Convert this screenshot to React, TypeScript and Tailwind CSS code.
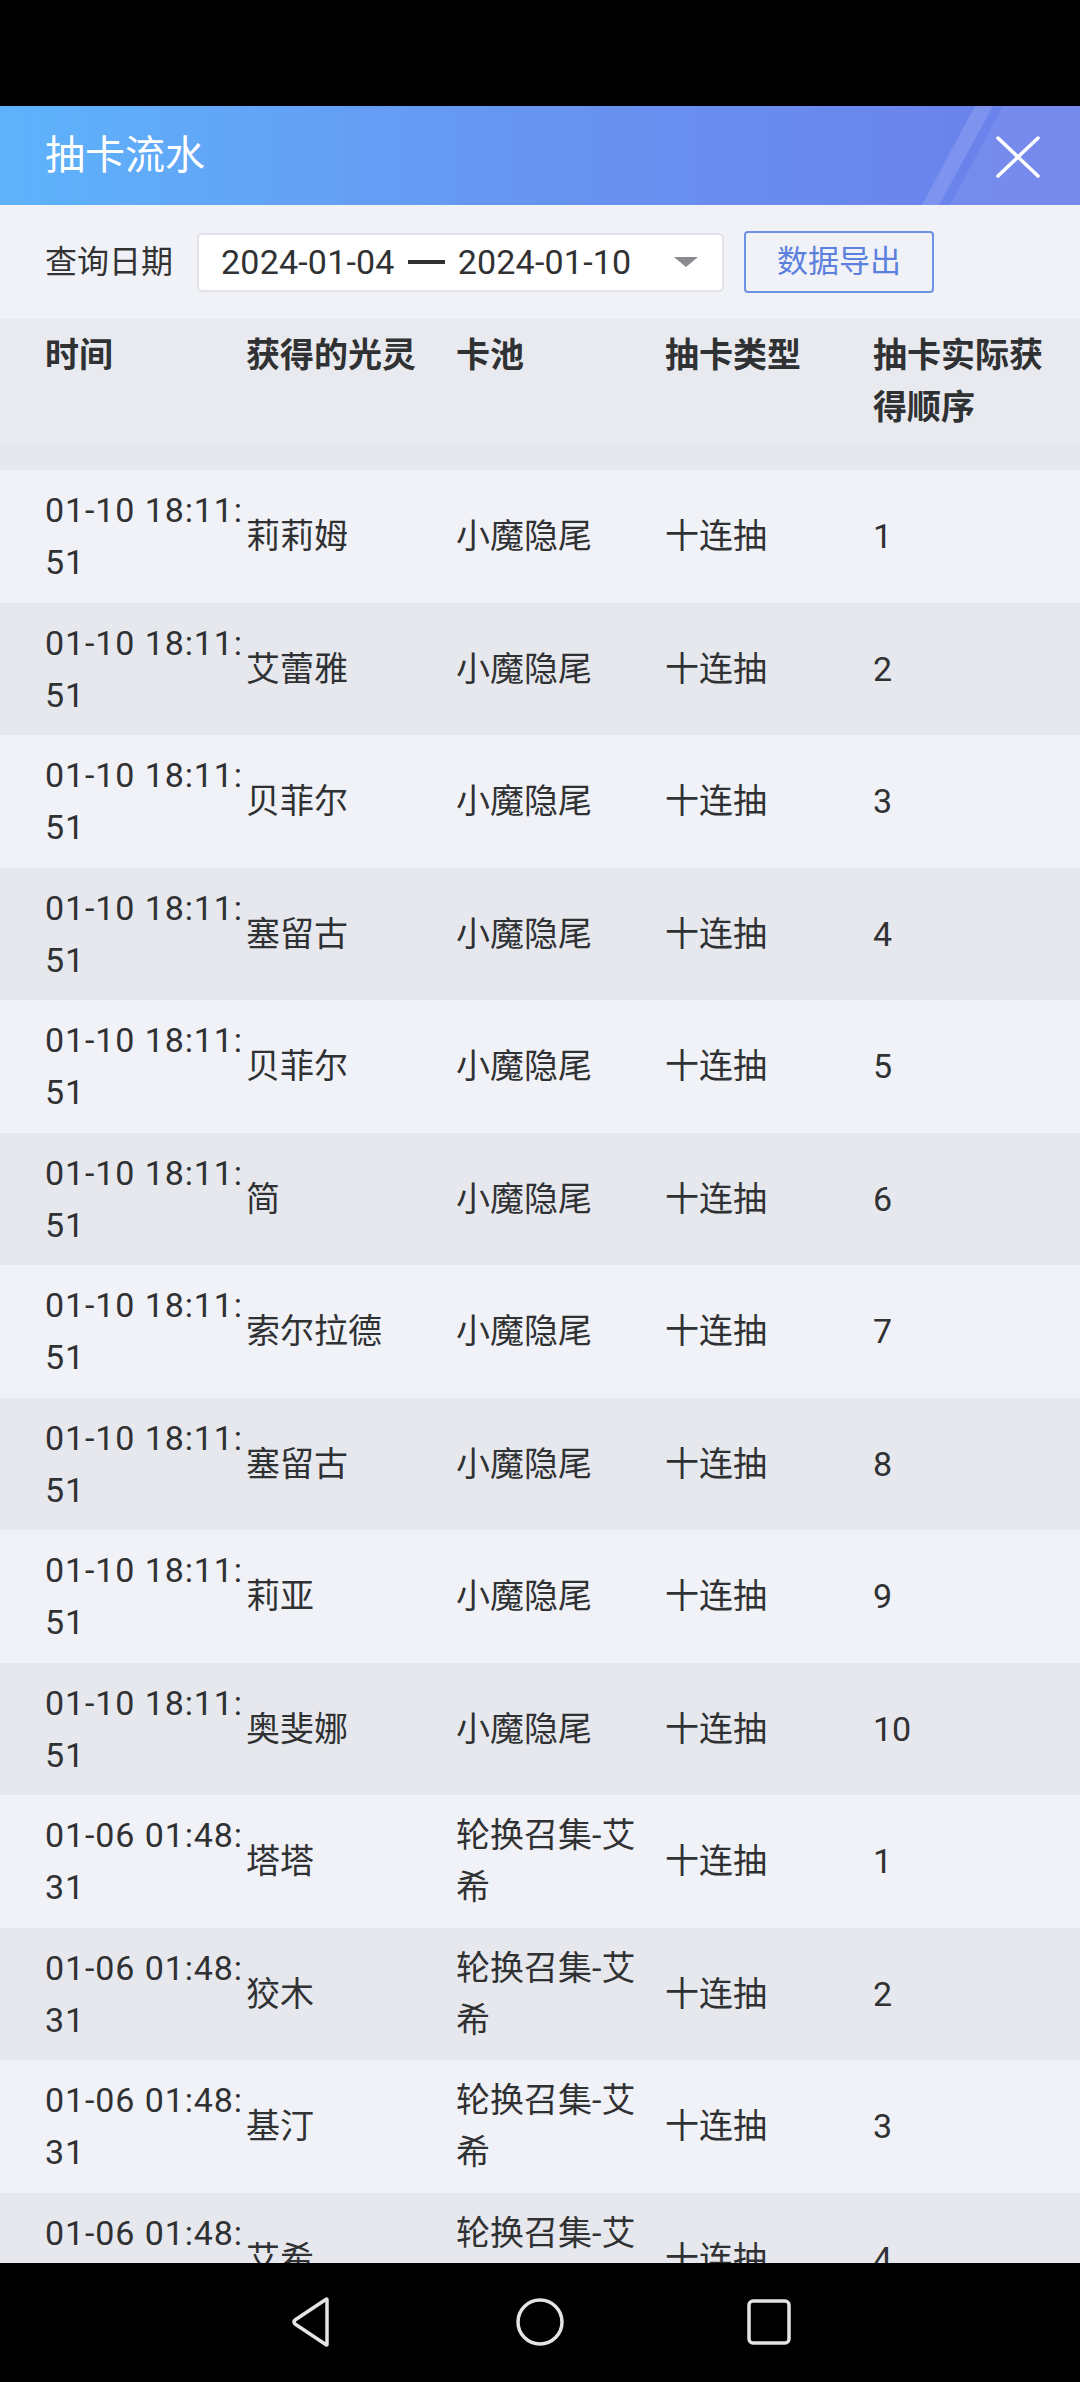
const font = { fontFamily: 'Roboto, "Noto Sans CJK SC", sans-serif' };

type Row = { time: string; name: string; pool: string[]; order: number };

const first = ['莉莉姆', '艾蕾雅', '贝菲尔', '塞留古', '贝菲尔', '简', '索尔拉德', '塞留古', '莉亚', '奥斐娜'];
const second = ['塔塔', '狡木', '基汀', '艾希'];

const rows: Row[] = [
  ...first.map((name, i) => ({ time: '01-10 18:11:|51', name, pool: ['小魔隐尾'], order: i + 1 })),
  ...second.map((name, i) => ({ time: '01-06 01:48:|31', name, pool: ['轮换召集-艾', '希'], order: i + 1 })),
];

function CloseIcon() {
  return (
    <svg width="44" height="42" viewBox="0 0 44 42" fill="none">
      <path d="M2 2 L42 40 M42 2 L2 40" stroke="white" strokeWidth="3.5" strokeLinecap="round" />
    </svg>
  );
}

function NavBar() {
  return (
    <div className="flex h-[119px] shrink-0 items-center justify-center gap-[182px] bg-black pb-[2px]">
      <svg width="44" height="50" viewBox="0 0 44 50" fill="none">
        <path d="M38 3 L38 47 Q38 49 36 47 L6 27 Q4 25 6 23 L36 3 Q38 1 38 3 Z" stroke="#e4e4e4" strokeWidth="3.5" strokeLinejoin="round" />
      </svg>
      <svg width="50" height="50" viewBox="0 0 50 50" fill="none">
        <circle cx="25" cy="25" r="22" stroke="#e4e4e4" strokeWidth="3.5" />
      </svg>
      <svg width="44" height="46" viewBox="0 0 44 46" fill="none">
        <rect x="2" y="2" width="40" height="42" rx="4" stroke="#e4e4e4" strokeWidth="3.5" />
      </svg>
    </div>
  );
}

export default function App() {
  return (
    <div className="flex h-[2382px] w-[1080px] flex-col overflow-hidden bg-[#f0f2f7] text-[#303133]" style={font}>
      <div className="h-[106px] shrink-0 bg-black" />

      {/* title bar */}
      <div className="relative flex h-[99px] shrink-0 items-center overflow-hidden bg-gradient-to-r from-[#5db3fb] via-[#6794f1] to-[#6b7feb] pl-[45px]">
        <svg className="absolute inset-0" width="1080" height="99" viewBox="0 0 1080 99">
          <polygon points="975,0 993,0 939,99 922,99" fill="white" fillOpacity="0.13" />
          <polygon points="1003,0 1080,0 1080,99 950,99" fill="white" fillOpacity="0.08" />
        </svg>
        <span className="relative text-[40px] leading-none text-white">抽卡流水</span>
        <div className="absolute right-[40px] top-[30px]">
          <CloseIcon />
        </div>
      </div>

      {/* filter */}
      <div className="flex h-[114px] shrink-0 items-center pl-[45px]">
        <span className="text-[32px] text-[#333]">查询日期</span>
        <div className="ml-[24px] flex h-[59px] w-[527px] items-center rounded-[5px] border-2 border-[#e1e3e8] bg-white pl-[22px] pr-[24px]">
          <span className="text-[34px] leading-none tracking-[0.2px] text-[#303133]">2024-01-04</span>
          <span className="mx-[13px] h-[4px] w-[37px] bg-[#303133]" />
          <span className="text-[34px] leading-none tracking-[0.2px] text-[#303133]">2024-01-10</span>
          <svg className="ml-auto" width="24" height="10" viewBox="0 0 24 10">
            <polygon points="0,0 24,0 12,10" fill="#8a8b8f" />
          </svg>
        </div>
        <button className="ml-[20px] flex h-[62px] w-[190px] items-center justify-center rounded-[4px] border-2 border-[#6e92e3] text-[31px] text-[#5c80dd]">
          数据导出
        </button>
      </div>

      {/* table */}
      <div className="flex-1 overflow-hidden">
        <div className="bg-[#e8eaef]">
          <div className="grid h-[124px] grid-cols-[201px_210px_209px_208px_1fr] pl-[45px] pt-[10px] text-[34px] font-bold leading-[52px]">
            <div>时间</div>
            <div>获得的光灵</div>
            <div>卡池</div>
            <div>抽卡类型</div>
            <div>
              抽卡实际获
              <br />
              得顺序
            </div>
          </div>
          <div className="h-[27px] bg-[#e6e8ed]" />
        </div>

        {rows.map((r, i) => {
          const [t1, t2] = r.time.split('|');
          return (
            <div
              key={i}
              className={`grid h-[132.5px] grid-cols-[201px_210px_209px_208px_1fr] items-center pl-[45px] text-[34px] leading-[52px] ${
                i % 2 === 0 ? 'bg-[#f0f2f7]' : 'bg-[#e6e8ee]'
              }`}
            >
              <div className="whitespace-nowrap tracking-[0.9px]">
                {t1}
                <br />
                {t2}
              </div>
              <div className="whitespace-nowrap">{r.name}</div>
              <div className="whitespace-nowrap">
                {r.pool.map((p, j) => (
                  <div key={j}>{p}</div>
                ))}
              </div>
              <div className="whitespace-nowrap">十连抽</div>
              <div>{r.order}</div>
            </div>
          );
        })}
      </div>

      <NavBar />
    </div>
  );
}
